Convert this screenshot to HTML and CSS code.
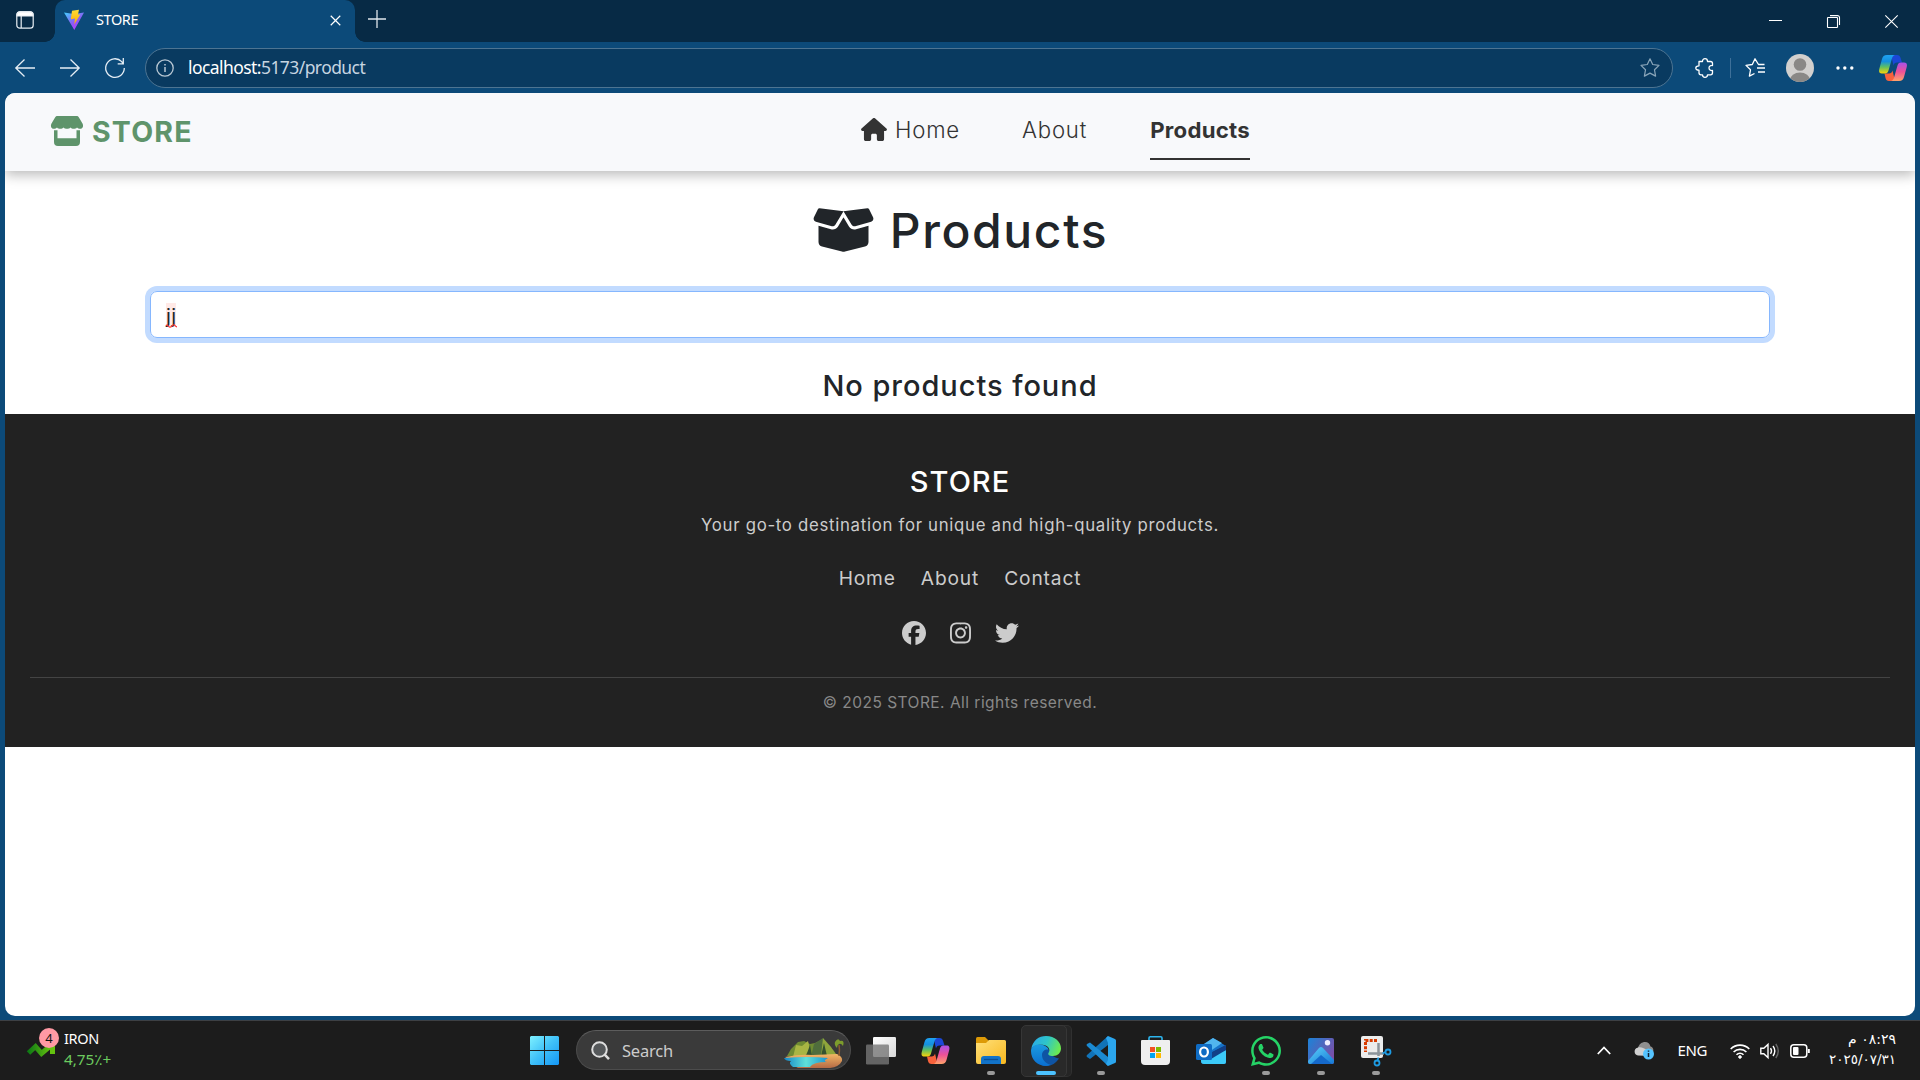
FILE: index.html
```html
<!DOCTYPE html>
<html lang="en">
<head>
<meta charset="utf-8">
<title>STORE</title>
<link rel="stylesheet" href="styles.css">
</head>
<body>
<svg class="defs" width="0" height="0" aria-hidden="true">
  <defs>
    <linearGradient id="cpA" x1="0" y1="0" x2="0" y2="1"><stop offset="0" stop-color="#1fa2f2"/><stop offset=".35" stop-color="#1490df"/><stop offset=".65" stop-color="#5fc060"/><stop offset="1" stop-color="#fbd408"/></linearGradient>
    <linearGradient id="cpB" x1="0" y1="0" x2="0" y2="1"><stop offset="0" stop-color="#a851e8"/><stop offset=".5" stop-color="#ee5197"/><stop offset="1" stop-color="#ffa36b"/></linearGradient>
    <symbol id="copilot" viewBox="0 0 28 26">
      <path d="M12 0h6c2 0 3 1 3.600 3l1.400 4.500h-5c-2 0-3 1-3.500 3z" fill="#1b47d6"/>
      <path d="M16 26h-6c-2 0-3-1-3.500-3L5.500 18.500H10c2 0 3-1 3.500-3z" fill="#f8623c"/>
      <path d="M8 0h8c-2 .5-2.600 2-3.200 4L9.500 15.500c-.6 2-1.500 3-3.500 3H3c-3 0-3.400-2-2.600-5L3 4c.8-2.800 2-4 5-4z" fill="url(#cpA)"/>
      <path d="M20 26h-8c2-.5 2.600-2 3.200-4l3.300-11.500c.6-2 1.500-3 3.500-3h3c3 0 3.400 2 2.600 5L25 22c-.8 2.800-2 4-5 4z" fill="url(#cpB)"/>
    </symbol>
  </defs>
</svg>

<div class="tabstrip">
  <div class="tabactions">
    <svg width="18" height="18" viewBox="0 0 18 18" fill="none" stroke="#e8eef3" stroke-width="1.200"><rect x=".8" y=".8" width="16.400" height="16.400" rx="3"/><path d="M1 3.500a3 3 0 0 1 3-2.700h10a3 3 0 0 1 3 2.700V5H1z" fill="#fff"/><path d="M5.200 5v12"/></svg>
  </div>
  <div class="tab">
    <svg width="20" height="20" viewBox="0 0 20 20"><defs><linearGradient id="vt" x1="0" y1="0" x2=".7" y2="1"><stop offset="0" stop-color="#41d1ff"/><stop offset=".6" stop-color="#8a5cf5"/><stop offset="1" stop-color="#bd34fe"/></linearGradient><linearGradient id="vb" x1="0" y1="0" x2="0" y2="1"><stop offset="0" stop-color="#ffdd35"/><stop offset="1" stop-color="#ffa800"/></linearGradient></defs><path d="M0 2.500 10 4l10-1.500L10.300 20z" fill="url(#vt)"/><path d="m8 .8 7-1-1 4.800 2.300-.2-6.100 10.200.8-6-4.200.6z" fill="url(#vb)"/></svg>
    <span class="tab-title">STORE</span>
    <svg class="close" width="11" height="11" viewBox="0 0 12 12" stroke="#fff" stroke-width="1.300"><path d="m.8.8 10.400 10.400M11.200.8.8 11.200"/></svg>
  </div>
  <svg class="newtab" width="18" height="18" viewBox="0 0 18 18" stroke="#dfe6ec" stroke-width="1.300"><path d="M9 0v18M0 9h18"/></svg>
  <div class="winctl">
    <svg width="13" height="13" viewBox="0 0 13 13" stroke="#fff"><path d="M0 5.500h13"/></svg>
    <svg width="13" height="13" viewBox="0 0 13 13" fill="none" stroke="#fff" stroke-width="1.100"><rect x=".5" y="2.500" width="10" height="10" rx=".6"/><path d="M3 .6h7.500a2 2 0 0 1 2 2V10"/></svg>
    <svg width="13" height="13" viewBox="0 0 13 13" stroke="#fff" stroke-width="1.100"><path d="m.3.300 12.400 12.400M12.700.3.3 12.700"/></svg>
  </div>
</div>

<div class="toolbar">
  <svg width="20" height="18" viewBox="0 0 20 18" fill="none" stroke="#e6eef5" stroke-width="1.300"><path d="M20 9H1M9.500.5.8 9l8.700 8.500"/></svg>
  <svg width="20" height="18" viewBox="0 0 20 18" fill="none" stroke="#e6eef5" stroke-width="1.300"><path d="M0 9h19M10.500.5 19.200 9l-8.700 8.500"/></svg>
  <svg width="20" height="20" viewBox="0 0 20 20" fill="none" stroke="#e6eef5" stroke-width="1.300"><path d="M19.300 10A9.300 9.300 0 1 1 16.700 3.600L18 5.500M18.300 0v5.800h-5.600"/></svg>
  <div class="address">
    <svg width="18" height="18" viewBox="0 0 18 18" fill="none" stroke="#b9c8d4" stroke-width="1.300"><circle cx="9" cy="9" r="8.200"/><path d="M9 8v5M9 5v1.500" stroke-width="1.500"/></svg>
    <span class="url"><b>localhost:</b>5173/product</span>
    <svg width="20" height="19" viewBox="0 0 20 19" fill="none" stroke="#8aa5b9" stroke-width="1.200" stroke-linejoin="round"><path d="m10 .8 2.700 5.700 6.300.9-4.500 4.400 1.100 6.300-5.600-3-5.600 3 1.100-6.300L1 7.400l6.300-.9z"/></svg>
  </div>
  <div class="tools">
    <svg width="20" height="20" viewBox="0 0 20 20" fill="none" stroke="#fff" stroke-width="1.300" stroke-linejoin="round"><path d="M4 3.500h3.500C7.500 1.500 8.500.7 10 .7s2.500.8 2.500 2.800h3c1.300 0 2 .7 2 2v2c-2-.2-3.500.7-3.500 2.500s1.500 2.700 3.500 2.500v2.300c0 1.300-.7 2-2 2h-3c0 1.700-1 2.500-2.500 2.500s-2.500-.8-2.500-2.500H6c-1.300 0-2-.7-2-2v-2.600C2 12.200.8 11.500.8 10S2 7.800 4 7.800z"/></svg>
    <i class="divider"></i>
    <svg width="20" height="19" viewBox="0 0 20 19" fill="none" stroke="#fff" stroke-width="1.300" stroke-linejoin="round"><path d="M19.500 6.500h-6L10 .8 7.300 6.500 1 7.400l4.500 4.400-1.100 6.300 5.100-2.600M12 10h8M13 14h7"/></svg>
    <svg class="avatar" width="28" height="28" viewBox="0 0 28 28"><defs><clipPath id="av"><circle cx="14" cy="14" r="14"/></clipPath></defs><g clip-path="url(#av)"><path d="M0 0h28v28H0z" fill="#d2d0ce"/><circle cx="14" cy="10.500" r="6.300" fill="#8a8886"/><ellipse cx="14" cy="26" rx="10" ry="7.500" fill="#8a8886"/></g></svg>
    <svg class="dots" width="18" height="4" viewBox="0 0 18 4" fill="#fff"><circle cx="2" cy="2" r="1.700"/><circle cx="8.800" cy="2" r="1.700"/><circle cx="15.800" cy="2" r="1.700"/></svg>
    <svg width="28" height="26"><use href="#copilot"/></svg>
  </div>
</div>

<div class="viewport">
  <header class="navbar">
    <a class="brand">
      <svg width="32" height="30" viewBox="0 0 32 30" fill="#5f946b"><path d="M6.500 0h19c1 0 1.800.4 2.300 1.300l3.700 6.200c1.300 2.500.3 5.300-2.200 5.300-1.600 0-2.500-.5-3.300-1.400-.9 1-2 1.400-3.300 1.400s-2.500-.5-3.300-1.400c-.9 1-2 1.400-3.400 1.400s-2.500-.4-3.400-1.400c-.8.9-2 1.400-3.300 1.400s-2.400-.4-3.300-1.400c-.8.900-1.700 1.400-3.300 1.400-2.500 0-3.500-2.800-2.200-5.300l3.700-6.200C4.700.4 5.500 0 6.500 0z"/><path d="M3 14.300h3.500v8h19v-8H29V26c0 2.700-1.300 4-4 4H7c-2.700 0-4-1.300-4-4z"/></svg>
      <span>STORE</span>
    </a>
    <nav class="menu">
      <a class="m1"><svg width="26" height="23" viewBox="0 0 576 512" fill="#333"><path d="M575.800 255.500c0 18-15 32.100-32 32.100h-32l.7 160.200c0 2.700-.2 5.400-.5 8.100V472c0 22.100-17.900 40-40 40H392c-22.100 0-40-17.900-40-40v-88c0-17.700-14.300-32-32-32h-64c-17.700 0-32 14.300-32 32v88c0 22.100-17.900 40-40 40h-80c-22.100 0-40-17.900-40-40V287.600H32c-18 0-32-14-32-32.100 0-9 3-17 10-24L266.400 8c7-7 15-8 22-8s15 2 21 7l255.400 224.500c8 7 12 15 11 24z"/></svg><span>Home</span></a>
      <a class="m2">About</a>
      <a class="active m3">Products</a>
    </nav>
  </header>

  <main class="products">
    <h1><svg width="63" height="50" viewBox="0 0 640 512" fill="#212529"><path d="M58.900 42.100c3-6.100 9.600-9.600 16.300-8.700L320 64 564.800 33.400c6.700-.8 13.300 2.700 16.300 8.700l41.700 83.400c9 17.900-.6 39.600-19.800 45.100L439.600 217.300c-13.900 4-28.800-1.900-36.200-14.300L320 64 236.600 203c-7.400 12.400-22.300 18.300-36.200 14.300L37.100 170.600c-19.300-5.500-28.800-27.200-19.800-45.100L58.900 42.100zM321.100 128l54.900 91.400c14.900 24.800 44.600 36.600 72.500 28.600L576 211.600v167c0 22-15 41.200-36.400 46.600l-204.100 51c-10.200 2.600-20.900 2.600-31 0l-204.100-51C79 419.700 64 400.500 64 378.500v-167L191.600 248c27.800 8 57.600-3.800 72.500-28.600L318.900 128h2.200z"/></svg><span>Products</span></h1>
    <div class="search"><span class="typo">jj<svg width="11" height="4" viewBox="0 0 11 4" fill="none" stroke="#f33" stroke-width="1.200"><path d="M0 1.500c1.500-1.500 2.500 1.700 4 1.700S7 .5 8 .8s1.500 2 3 2"/></svg></span></div>
    <p class="empty">No products found</p>
  </main>

  <footer class="footer">
    <div class="f-brand">STORE</div>
    <p class="f-tag">Your go-to destination for unique and high-quality products.</p>
    <div class="f-links"><a>Home</a><a>About</a><a>Contact</a></div>
    <div class="f-social">
      <svg width="24" height="24" viewBox="0 0 512 512" fill="#ccc"><path d="M512 256C512 114.600 397.400 0 256 0S0 114.600 0 256C0 376 82.700 476.800 194.200 504.500V334.200H141.400V256h52.800V222.300c0-87.100 39.400-127.500 125-127.500c16.200 0 44.200 3.200 55.700 6.400V172c-6-.6-16.500-1-29.600-1c-42 0-58.200 15.900-58.200 57.200V256h83.600l-14.400 78.200H287V510.100C413.800 494.800 512 386.900 512 256z"/></svg>
      <svg width="21" height="24" viewBox="0 0 448 512" fill="#ccc"><path d="M224.100 141c-63.600 0-114.900 51.300-114.900 114.900s51.300 114.900 114.900 114.900S339 319.500 339 255.900 287.700 141 224.100 141zm0 189.600c-41.100 0-74.700-33.500-74.700-74.700s33.500-74.700 74.700-74.700 74.700 33.500 74.700 74.700-33.600 74.700-74.700 74.700zm146.400-194.300c0 14.900-12 26.800-26.800 26.800-14.900 0-26.800-12-26.800-26.800s12-26.800 26.800-26.800 26.800 12 26.800 26.800zm76.100 27.200c-1.700-35.900-9.900-67.700-36.200-93.900-26.200-26.200-58-34.400-93.900-36.200-37-2.100-147.900-2.100-184.900 0-35.800 1.700-67.600 9.900-93.900 36.100s-34.400 58-36.200 93.900c-2.100 37-2.100 147.900 0 184.900 1.700 35.900 9.900 67.700 36.200 93.900s58 34.400 93.900 36.200c37 2.100 147.900 2.100 184.900 0 35.900-1.700 67.700-9.900 93.900-36.200 26.200-26.200 34.400-58 36.200-93.900 2.100-37 2.100-147.800 0-184.800zM398.800 388c-7.800 19.600-22.900 34.700-42.600 42.600-29.500 11.700-99.500 9-132.100 9s-102.700 2.600-132.100-9c-19.600-7.800-34.700-22.900-42.600-42.600-11.700-29.500-9-99.500-9-132.100s-2.600-102.700 9-132.100c7.800-19.600 22.900-34.700 42.600-42.600 29.500-11.700 99.500-9 132.100-9s102.700-2.600 132.100 9c19.600 7.800 34.700 22.900 42.600 42.600 11.700 29.500 9 99.500 9 132.100s2.700 102.700-9 132.100z"/></svg>
      <svg width="24" height="24" viewBox="0 0 512 512" fill="#ccc"><path d="M459.370 151.716c.325 4.548.325 9.097.325 13.645 0 138.720-105.583 298.558-298.558 298.558-59.452 0-114.680-17.219-161.137-47.106 8.447.974 16.568 1.299 25.340 1.299 49.055 0 94.213-16.568 130.274-44.832-46.132-.975-84.792-31.188-98.112-72.772 6.498.974 12.995 1.624 19.818 1.624 9.421 0 18.843-1.300 27.614-3.573-48.081-9.747-84.143-51.980-84.143-102.985v-1.299c13.969 7.797 30.214 12.670 47.431 13.319-28.264-18.843-46.781-51.005-46.781-87.391 0-19.492 5.197-37.360 14.294-52.954 51.655 63.675 129.300 105.258 216.365 109.807-1.624-7.797-2.599-15.918-2.599-24.040 0-57.828 46.782-104.934 104.934-104.934 30.213 0 57.502 12.670 76.670 33.137 23.715-4.548 46.456-13.320 66.599-25.340-7.798 24.366-24.366 44.833-46.132 57.827 21.117-2.273 41.584-8.122 60.426-16.243-14.292 20.791-32.161 39.308-52.628 54.253z"/></svg>
    </div>
    <div class="f-copy">© 2025 STORE. All rights reserved.</div>
  </footer>
</div>

<div class="taskbar">
  <div class="widget">
    <div class="stock">
      <svg width="28" height="18" viewBox="0 0 28 18" fill="none" stroke-width="5"><defs><linearGradient id="st"><stop offset="0" stop-color="#0f7a14"/><stop offset="1" stop-color="#6cc70f"/></linearGradient></defs><path d="m1.500 13 7-6.500 6 7L25 4.500" stroke="url(#st)"/><path d="M15 2.500h10.500V14" stroke="#64c30f"/></svg>
      <span class="badge">4</span>
    </div>
    <div class="quote"><span>IRON</span><span class="up">4,75٪+</span></div>
  </div>
  <div class="slot start"><svg width="29" height="29" viewBox="0 0 29 29"><defs><linearGradient id="wn" x1="0" y1="0" x2="29" y2="29" gradientUnits="userSpaceOnUse"><stop offset="0" stop-color="#7ef1ff"/><stop offset=".5" stop-color="#3fc0f8"/><stop offset="1" stop-color="#1496f5"/></linearGradient></defs><path d="M1 0h13v14H0V1zM15 0h13l1 1v13H15zM0 15h14v14H1l-1-1zM15 15h14v13l-1 1H15z" fill="url(#wn)"/></svg></div>
  <div class="searchbox">
    <svg width="19" height="19" viewBox="0 0 19 19" fill="none" stroke="#dedede" stroke-width="2"><circle cx="8.500" cy="8.500" r="7.300" fill="#55585a"/><path d="m13.700 13.700 4.300 4.500" stroke-width="2.500"/></svg>
    <span>Search</span>
    <svg class="scene" width="60" height="31" viewBox="0 0 60 31"><defs><linearGradient id="lk"><stop offset="0" stop-color="#1387c9"/><stop offset=".5" stop-color="#5fe0d8"/><stop offset="1" stop-color="#1793d2"/></linearGradient><linearGradient id="sd" x1="0" y1="0" x2="0" y2="1"><stop offset="0" stop-color="#f3b765"/><stop offset="1" stop-color="#b56a45"/></linearGradient></defs><path d="M3 18 7 11l7-7 6-1 6 3 5-1 8-4 5 6 6 6 4 6z" fill="#6f8b32"/><path d="m12 7 6 1 6-5 2 8-6 8H9z" fill="#a9b543"/><path d="m30 6 9-6 2 9-5 10h-9z" fill="#4f6d3c"/><path d="m39 0 8 9 6 9H37z" fill="#8fa63b"/><path d="m26 7 2 11h-6zM40 5l3 13h-6z" fill="#35522f"/><path d="M1 19q16-3 28-2l24-1q6 3 5 7-3 6-12 7H14q-6-3-4-6z" fill="url(#sd)"/><path d="M0 20q24-2 44 0-6 3-1 4-14 0-17 5H9q-5-4-2-6-6 0-7-3z" fill="url(#lk)"/><path d="M55 18q1-6 0-11" stroke="#8c5b32" stroke-width="1.500" fill="none"/><path d="M51 4q3-5 5-1 5-1 3 5-2-3-4-2-2 1-2 4-3-3-2-6z" fill="#7d9c2c"/></svg>
  </div>
  <div class="slot"><svg width="30" height="28" viewBox="0 0 30 28"><defs><linearGradient id="tv" x1="0" y1="0" x2="1" y2="1"><stop offset="0" stop-color="#fff"/><stop offset="1" stop-color="#d8d8d8"/></linearGradient></defs><rect x="7" width="23" height="20" rx="1.200" fill="url(#tv)"/><rect y="7.500" width="23" height="20" rx="1.200" fill="#777" fill-opacity=".8"/></svg></div>
  <div class="slot"><svg width="29" height="26"><use href="#copilot"/></svg></div>
  <div class="slot run"><svg width="30" height="27" viewBox="0 0 30 27"><defs><linearGradient id="fe" x1="0" y1="0" x2="1" y2="1"><stop offset="0" stop-color="#ffe07a"/><stop offset="1" stop-color="#f8b81f"/></linearGradient></defs><path d="M0 1.500Q0 0 1.500 0H9l3.500 3.500V8H0z" fill="#dd9a07"/><path d="M0 6h10l3-3h15.500Q30 3 30 4.500V25q0 2-2 2H2q-2 0-2-2z" fill="url(#fe)"/><path d="M5 27v-5q0-3 3-3h14q3 0 3 3v5z" fill="#1273c9"/><path d="M8 22.500h14" stroke="#0b4f95" stroke-width="1.300"/></svg></div>
  <div class="slot run current"><svg width="30" height="30" viewBox="0 0 30 30"><defs><linearGradient id="eg" x1="0" y1=".2" x2="1" y2=".5"><stop offset="0" stop-color="#2aa8e8"/><stop offset=".5" stop-color="#2ec5c9"/><stop offset="1" stop-color="#6cea50"/></linearGradient><linearGradient id="eb" x1="0" y1="0" x2="0" y2="1"><stop offset="0" stop-color="#1b9be0"/><stop offset="1" stop-color="#0b6fd0"/></linearGradient></defs><path d="M12 10c8 0 4 10 16 12.500C25 27 21 30 15 30 5 30 6 12 12 10z" fill="#0f54a4"/><path d="M.3 13C1.500 4.500 8 0 15 0c9 0 15 6 15 12.500 0 4.500-3.500 7.500-8 7.500-4 0-5.500-1.500-4.500-3 2-3 .5-7-4.500-8-6-1-11 1-12.700 4z" fill="url(#eg)"/><path d="M0 15C0 10.500 4 8 9 8.500c4 .3 8 2.500 8.500 5-3.500-.5-6.500 1.500-6.500 5.500 0 5 4 8.500 8.500 9.800-1.500.8-3 1.200-4.500 1.200C6.500 30 0 23.500 0 15z" fill="url(#eb)"/></svg></div>
  <div class="slot run"><svg width="30" height="30" viewBox="0 0 30 30"><path d="M22 0v9L4 23l-3-2q-1-1 0-2z" fill="#1173b8"/><path d="M1 10q-1-1 0-2l3-1.500L22 21v9z" fill="#1b8ad2"/><path d="m22 0 7 3q1 .5 1 1.500v21q0 1-1 1.500l-7 3-2-2 2-4V7l-2-5z" fill="#2ba6ee"/></svg></div>
  <div class="slot"><svg width="29" height="29" viewBox="0 0 29 29"><path d="M8 6V2q0-1.200 1.200-1.200h10.600Q21 .8 21 2v4" fill="none" stroke="#2cb5ee" stroke-width="1.600"/><path d="M0 5q0-1 1-1h27q1 0 1 1v20q0 4-4 4H4q-4 0-4-4z" fill="#efefef"/><path d="M9 11h5v5H9z" fill="#f25022"/><path d="M15 11h5v5h-5z" fill="#7fba00"/><path d="M9 17h5v5H9z" fill="#00a4ef"/><path d="M15 17h5v5h-5z" fill="#ffb900"/></svg></div>
  <div class="slot"><svg width="30" height="26" viewBox="0 0 30 26"><path d="M5 8 17 0l13 8v16q0 2-2 2H8q-3 0-3-3z" fill="#1673c9"/><path d="m8 6 9-6 9 5-13 9z" fill="#51b5ee"/><path d="M16 14 30 7v7L17 22z" fill="#123f86"/><path d="m5 17 10 1 15-6v12q0 2-2 2H8q-3 0-3-3z" fill="#3ccaf8"/><path d="m15 15 15-8v5l-15 9z" fill="#123f86"/><rect y="6" width="16" height="16" rx="1.500" fill="#0f6cc4"/><ellipse cx="8" cy="14" rx="3.900" ry="4.500" fill="none" stroke="#fff" stroke-width="2.200"/></svg></div>
  <div class="slot run"><svg width="30" height="30" viewBox="0 32 448 448" fill="#25d366"><path d="M380.900 97.100C339 55.100 283.200 32 223.900 32c-122.400 0-222 99.600-222 222 0 39.100 10.200 77.300 29.600 111L0 480l117.700-30.900c32.400 17.700 68.900 27 106.100 27h.1c122.300 0 224.100-99.600 224.100-222 0-59.300-25.200-115-67.100-157zm-157 341.600c-33.200 0-65.700-8.900-94-25.700l-6.700-4-69.800 18.300L72 359.200l-4.400-7c-18.500-29.400-28.200-63.300-28.200-98.200 0-101.700 82.800-184.500 184.600-184.500 49.300 0 95.600 19.200 130.400 54.100 34.800 34.900 56.200 81.200 56.100 130.500 0 101.800-84.900 184.600-186.600 184.600zm101.200-138.200c-5.500-2.800-32.800-16.200-37.900-18-5.100-1.900-8.800-2.800-12.500 2.800-3.700 5.600-14.300 18-17.600 21.800-3.200 3.700-6.500 4.200-12 1.400-32.600-16.300-54-29.100-75.500-66-5.700-9.800 5.700-9.100 16.300-30.300 1.800-3.700.9-6.900-.5-9.700-1.400-2.800-12.500-30.100-17.100-41.200-4.500-10.800-9.100-9.300-12.500-9.500-3.200-.2-6.900-.2-10.600-.2-3.700 0-9.700 1.400-14.800 6.900-5.100 5.600-19.400 19-19.400 46.300 0 27.300 19.900 53.700 22.600 57.400 2.800 3.700 39.100 59.700 94.800 83.800 35.200 15.200 49 16.500 66.600 13.900 10.700-1.600 32.800-13.400 37.400-26.400 4.600-13 4.600-24.100 3.200-26.400-1.300-2.500-5-3.900-10.500-6.600z"/></svg></div>
  <div class="slot run"><svg width="26" height="26" viewBox="0 0 26 26"><defs><linearGradient id="ph" x1="0" y1="0" x2="1" y2=".6"><stop offset="0" stop-color="#1b83d8"/><stop offset="1" stop-color="#7a4fa8"/></linearGradient><linearGradient id="pm" x1="0" y1="0" x2="1" y2="1"><stop offset="0" stop-color="#5bd2fb"/><stop offset="1" stop-color="#1678d6"/></linearGradient></defs><rect width="26" height="26" rx="2" fill="url(#ph)"/><path d="m0 23 11-13q2-2 4 0l11 12v2q0 2-2 2H2q-2 0-2-2z" fill="url(#pm)"/><path d="m3 26 10-9 11 9z" fill="#1569cb"/><circle cx="19.500" cy="4.800" r="2.700" fill="#eef"/></svg></div>
  <div class="slot run"><svg width="30" height="30" viewBox="0 0 30 30"><rect width="22" height="22" rx="2" fill="#ececec"/><path d="M16 4.500H4.500V16" fill="none" stroke="#d83b01" stroke-width="3" stroke-dasharray="3 1.300"/><path d="M17.500 7v13M7 17.500h16" stroke="#8c949b" stroke-width="2.500"/><g fill="none" stroke="#1e9be2" stroke-width="1.800"><circle cx="27" cy="16" r="2.500"/><circle cx="16" cy="27" r="2.500"/><path d="m24.500 16-3 1.500M16.500 24.500l1-3"/></g></svg></div>

  <div class="tray">
    <svg class="chev" width="14" height="9" viewBox="0 0 14 9" fill="none" stroke="#fff" stroke-width="1.800"><path d="m.8 8 6.200-6.500L13.200 8"/></svg>
    <svg class="cloud" width="20" height="18" viewBox="0 0 20 18"><path d="M4 13a4 4 0 0 1 0-7C5 2 8 0 11 0c3 0 5 2 5.500 4.500C19 5 20 8 19 10l-6 4z" fill="#8f8f8f"/><path d="M4 13.500a4 4 0 0 1-.5-7.800C7 4 10 7 14 8l-1 5.500z" fill="#d0d0d0"/><circle cx="14.500" cy="12" r="5.500" fill="#55c4ff"/><path d="M14.500 11v4M14.500 8.500v1.300" stroke="#123" stroke-width="1.500"/></svg>
    <span class="lang">ENG</span>
    <svg class="wifi" width="20" height="16" viewBox="0 0 20 16" fill="none" stroke="#fff" stroke-width="1.600"><path d="M.7 6a13 13 0 0 1 18.600 0M3.600 9a9 9 0 0 1 12.800 0M6.500 11.800a5 5 0 0 1 7 0"/><circle cx="10" cy="14" r="1.300" fill="#fff" stroke-width="1"/></svg>
    <svg class="vol" width="20" height="16" viewBox="0 0 20 16" fill="none" stroke="#fff" stroke-width="1.400"><path d="M.8 5.300h3L8 1.400v13.200l-4.200-3.900h-3z"/><path d="M10.500 5.200q2 2.800 0 5.600M13 3q3.600 5 0 10"/><path d="M15.800 1q5 7 0 14" stroke="#666"/></svg>
    <svg class="bat" width="20" height="14" viewBox="0 0 20 14" fill="none" stroke="#fff" stroke-width="1.500"><rect x=".8" y=".8" width="16" height="12.400" rx="3"/><rect x="3" y="3" width="5.500" height="8" rx="1" fill="#fff" stroke="none"/><path d="M18.800 5v4" stroke-width="2"/></svg>
    <div class="clock" dir="rtl"><span>٠٨:٢٩ م</span><span class="date">٢٠٢٥/٠٧/٣١</span></div>
  </div>
</div>
</body>
</html>
```
FILE: styles.css
```css
* { box-sizing: border-box; }
body { margin: 0; width: 1920px; height: 1080px; overflow: hidden; display: flex; flex-direction: column; background: #0c4a79; font-family: "Noto Sans", "Open Sans", "DejaVu Sans", sans-serif; }
svg { display: block; flex: none; overflow: visible; }
.defs { position: absolute; }
h1, p { margin: 0; }

/* browser chrome */
.tabstrip { height: 42px; display: flex; background: #072a45; flex: none; }
.tabactions { width: 55px; padding: 11px 0 0 16px; border-radius: 0 0 10px 0; background: #072a45; }
.tab { position: relative; width: 300px; height: 42px; background: #0c4a79; border-radius: 10px 10px 0 0; display: flex; align-items: center; padding: 0 14px 3px 9px; }
.tab::before, .tab::after { content: ""; position: absolute; bottom: 0; width: 10px; height: 10px; }
.tab::before { left: -10px; background: radial-gradient(circle at 0 0, #072a45 9.500px, #0c4a79 10px); }
.tab::after { right: -10px; background: radial-gradient(circle at 100% 0, #072a45 9.500px, #0c4a79 10px); }
.tab-title { flex: 1; margin-left: 12px; color: #fff; font-size: 14.500px; letter-spacing: -.4px; padding-bottom: 2px; }
.tab .close { margin-top: 2px; }
.newtab { margin: 10px 0 0 13px; }
.winctl { margin-left: auto; display: flex; gap: 45px; padding: 15px 22px 0 0; }
.toolbar { height: 51px; flex: none; display: flex; align-items: center; padding: 0 13px 0 15px; }
.toolbar > svg { margin-right: 25px; }
.toolbar > svg:nth-of-type(3) { margin-right: 20px; }
.address { width: 1528px; height: 40px; border: 1px solid #4d7492; border-radius: 20px; background: #093a60; display: flex; align-items: center; padding: 0 12px 0 10px; }
.url { flex: 1; margin-left: 14px; font-size: 17.500px; letter-spacing: -.570px; color: #c6d5e1; line-height: 24px; padding-bottom: 2px; }
.url b { font-weight: 400; color: #fff; }
.tools { flex: 1; display: flex; align-items: center; justify-content: space-between; padding-left: 22px; }
.tools .avatar { margin: 0 2px 0 -2px; }
.tools .dots { margin: 0 2px 0 -2px; }
.divider { width: 1px; height: 20px; background: #3e7099; margin: 0 -8px; }

/* page */
.viewport { margin: 0 5px; height: 923px; flex: none; border-radius: 10px; overflow: hidden; background: #fff; font-family: Inter, "Liberation Sans", sans-serif; color: #212529; }
.navbar { position: relative; height: 78px; background: #f8f9fb; box-shadow: 0 4px 12px rgba(0,0,0,.27); display: flex; align-items: center; padding-left: 46px; }
.brand { display: flex; align-items: center; gap: 9px; width: 810px; color: #5f946b; font-weight: 700; font-size: 28.500px; line-height: 34px; letter-spacing: 1.200px; }
.brand svg { margin-top: -2px; }
.menu { display: flex; color: #333; font-size: 22.200px; font-weight: 300; line-height: 28px; letter-spacing: .800px; }
.menu a { display: flex; align-items: center; gap: 8px; height: 56px; padding-bottom: 3px; border-bottom: 2px solid transparent; }
.menu .m2 { margin-left: 62px; }
.menu .m3 { margin-left: 63px; letter-spacing: .270px; }
.menu .active { font-weight: 700; border-color: #333; }
.products { padding: 35px 145px 11px; }
h1 { display: flex; justify-content: center; align-items: center; gap: 15px; height: 50px; margin-bottom: 35px; font-size: 48px; line-height: 50px; font-weight: 500; letter-spacing: 1.600px; }
h1 svg { margin-top: -3px; }
.search { height: 47px; border: 1px solid #86b7fe; border-radius: 7px; box-shadow: 0 0 0 5px #c2dbff; padding: 0 15px; display: flex; align-items: center; font-size: 20px; }
.typo { position: relative; display: block; height: 24px; line-height: 27px; background: #ffe9e6; letter-spacing: .3px; }
.typo svg { position: absolute; left: 0; bottom: -1px; }
.empty { margin-top: 31px; text-align: center; font-size: 29px; line-height: 34px; font-weight: 500; letter-spacing: .950px; }

.footer { height: 333px; background: #222; padding: 51px 25px 31px; text-align: center; color: #ccc; }
.f-brand { color: #fff; font-size: 29px; line-height: 34px; font-weight: 500; letter-spacing: 1px; }
.f-tag { margin-top: 13px; font-size: 16.800px; line-height: 26px; letter-spacing: .700px; }
.f-links { margin-top: 27px; display: flex; justify-content: center; gap: 25px; font-size: 19.200px; line-height: 26px; letter-spacing: .850px; }
.f-social { margin-top: 30px; display: flex; justify-content: center; gap: 24px; }
.f-copy { margin-top: 32px; border-top: 1px solid #444; padding-top: 12px; font-size: 15.500px; line-height: 26px; color: #888; letter-spacing: .470px; }

/* taskbar */
.taskbar { margin-top: 4px; height: 60px; flex: none; background: #1c1c1c; border-top: 1px solid #3d4044; display: flex; color: #fff; }
.widget { width: 516px; display: flex; padding: 7px 0 0 27px; }
.stock { position: relative; width: 37px; padding-top: 12px; }
.badge { position: absolute; left: 12px; top: 0; width: 20px; height: 20px; border-radius: 50%; background: #ff99a4; color: #111; font-size: 13px; line-height: 20px; text-align: center; }
.quote { display: flex; flex-direction: column; font-size: 14.500px; line-height: 20.500px; letter-spacing: -.3px; }
.up { color: #6ccb5f; font-size: 15.300px; letter-spacing: .2px; }
.slot { position: relative; width: 55px; height: 59px; display: flex; align-items: center; justify-content: center; flex: none; }
.slot.start { width: 56px; }
.run::after { content: ""; position: absolute; bottom: 5px; left: 23.500px; width: 8px; height: 4px; border-radius: 2px; background: #9a9a9a; }
.current { z-index: 0; }
.current::before { content: ""; position: absolute; z-index: -1; left: 3px; top: 4px; width: 44px; height: 50px; border: 1px solid #363636; border-radius: 5px; background: #292929; box-shadow: 5px 0 0 -1px #252525, 5px 0 0 0 #303030; }
.current::after { left: 18px; width: 20px; background: #4cc2ff; }
.searchbox { margin: 9px 2px 0 4px; width: 275px; height: 40px; border: 1px solid #4c4c4c; border-top-color: #5c5c5c; border-radius: 20px; background: #3a3a3a; display: flex; align-items: center; padding-left: 14px; color: #ccc; font-size: 16.500px; letter-spacing: -.2px; }
.searchbox span { margin-left: 12px; }
.scene { margin: 6px 6px 0 auto; }
.tray { flex: 1; display: flex; align-items: center; justify-content: flex-end; padding-right: 24px; }
.cloud { margin: 0 24px 0 23px; }
.lang { font-size: 15px; letter-spacing: -.4px; padding-bottom: 2px; }
.wifi { margin-left: 23px; }
.vol { margin: 0 10px; }
.clock { width: 86px; display: flex; flex-direction: column; font: 14px/20px "DejaVu Sans", sans-serif; letter-spacing: -.5px; padding-bottom: 3px; }
.clock span { align-self: flex-start; }
.clock .date { font-size: 13.500px; }
```
